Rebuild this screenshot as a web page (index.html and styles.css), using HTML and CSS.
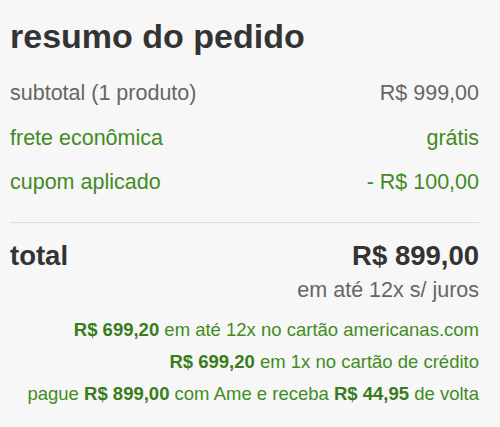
FILE: index.html
```html
<!DOCTYPE html>
<html lang="pt-BR">
<head>
    <meta charset="UTF-8">
    <meta name="viewport" content="width=device-width, initial-scale=1.0">
    <title>Resumo do pedido</title>
    <link rel="stylesheet" href="styles.css">
</head>
<body>
    <div class="summary">
        <h1>resumo do pedido</h1>
        <ul class="lines">
            <li class="line">
                <span>subtotal (1 produto)</span>
                <span>R$ 999,00</span>
            </li>
            <li class="line green">
                <span>frete econômica</span>
                <span>grátis</span>
            </li>
            <li class="line green">
                <span>cupom aplicado</span>
                <span>- R$ 100,00</span>
            </li>
        </ul>
        <div class="total">
            <span>total</span>
            <span>R$ 899,00</span>
        </div>
        <p class="installments">em até 12x s/ juros</p>
        <div class="offers">
            <p><strong>R$ 699,20</strong> em até 12x no cartão americanas.com</p>
            <p><strong>R$ 699,20</strong> em 1x no cartão de crédito</p>
            <p>pague <strong>R$ 899,00</strong> com Ame e receba <strong>R$ 44,95</strong> de volta</p>
        </div>
    </div>
</body>
</html>
```

FILE: styles.css
```css
body {
    font-family: "Liberation Sans", Arial, sans-serif;
    background-color: #f7f7f7;
    margin: 0;
    padding: 17px 21px 0 10px;
    color: #666;
}

h1 {
    font-size: 34px;
    line-height: 39px;
    font-weight: bold;
    color: #333;
    margin: 0 0 15px;
}

.lines {
    list-style-type: none;
    margin: 0;
    padding: 0 0 17px;
    border-bottom: 1px solid #dcdcdc;
}

.line {
    display: flex;
    justify-content: space-between;
    font-size: 21.5px;
    line-height: 44.5px;
}

.green {
    color: #428b24;
}

.total {
    display: flex;
    justify-content: space-between;
    margin-top: 17px;
    font-size: 27.5px;
    line-height: 32px;
    font-weight: bold;
    color: #333;
}

.installments {
    margin: 5px 0 0;
    text-align: right;
    font-size: 21.5px;
    line-height: 26px;
}

.offers {
    margin-top: 11px;
    text-align: right;
    color: #428b24;
    font-size: 18.5px;
    line-height: 32px;
}

.offers p {
    margin: 0;
}

.offers strong {
    color: #387c1b;
}
```
